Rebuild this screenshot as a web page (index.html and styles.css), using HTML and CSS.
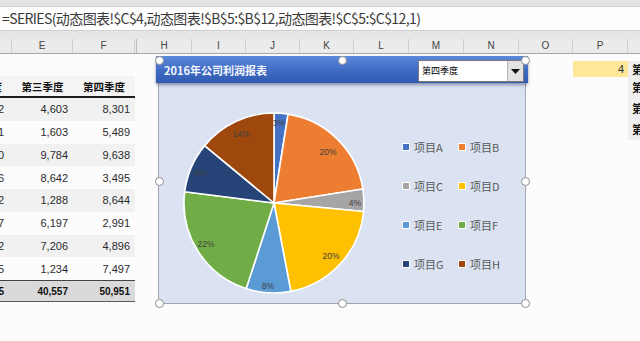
FILE: index.html
```html
<!DOCTYPE html>
<html lang="zh-CN">
<head>
<meta charset="utf-8">
<title>动态图表</title>
<link rel="stylesheet" href="styles.css">
</head>
<body>
<div class="app">
  <div class="topband"></div>
  <div class="formula">=SERIES(动态图表!$C$4,动态图表!$B$5:$B$12,动态图表!$C$5:$C$12,1)</div>
  <div class="band"></div>
  <div class="colhead">
    <div class="ch c12"></div>
    <div class="ch c61">E</div>
    <div class="ch c62">F</div>
    <div class="ch c2"></div>
    <div class="ch c55">H</div>
    <div class="ch c54">I</div>
    <div class="ch c54">J</div>
    <div class="ch c54">K</div>
    <div class="ch c55">L</div>
    <div class="ch c55">M</div>
    <div class="ch c55">N</div>
    <div class="ch c54">O</div>
    <div class="ch c55">P</div>
    <div class="ch cq"></div>
  </div>
  <div class="sheet">
    <div class="data">
      <div class="row head"><span>第二季度</span><span>第三季度</span><span>第四季度</span></div>
      <div class="row odd"><span class="num">3,812</span><span class="num">4,603</span><span class="num">8,301</span></div>
      <div class="row"><span class="num">7,201</span><span class="num">1,603</span><span class="num">5,489</span></div>
      <div class="row odd"><span class="num">2,460</span><span class="num">9,784</span><span class="num">9,638</span></div>
      <div class="row"><span class="num">5,316</span><span class="num">8,642</span><span class="num">3,495</span></div>
      <div class="row odd"><span class="num">6,532</span><span class="num">1,288</span><span class="num">8,644</span></div>
      <div class="row"><span class="num">4,147</span><span class="num">6,197</span><span class="num">2,991</span></div>
      <div class="row odd"><span class="num">8,932</span><span class="num">7,206</span><span class="num">4,896</span></div>
      <div class="row"><span class="num">3,155</span><span class="num">1,234</span><span class="num">7,497</span></div>
      <div class="row total"><span class="num">41,555</span><span class="num">40,557</span><span class="num">50,951</span></div>
    </div>
    <div class="side">
      <div class="srow r1"><span class="pcell">4</span><span class="qcell">第一季度</span></div>
      <div class="srow r2"><span class="pblank"></span><span class="qcell">第二季度</span></div>
      <div class="srow r3"><span class="pblank"></span><span class="qcell">第三季度</span></div>
      <div class="srow r4"><span class="pblank"></span><span class="qcell">第四季度</span></div>
    </div>

    <div class="chart">
      <div class="titlebar">
        <span class="title">2016年公司利润报表</span>
        <div class="dropdown"><span class="ddtext">第四季度</span><span class="ddbtn"><svg width="9" height="5" viewBox="0 0 9 5"><path d="M0 0H9L4.5 5Z" fill="#111"/></svg></span></div>
      </div>
      <div class="plot">
        <svg class="pie" width="184" height="184" viewBox="0 0 184 184">
          <g stroke="#fff" stroke-width="1.6" stroke-linejoin="round">
            <path d="M92 92L92 2A90 90 0 0 1 106.08 3.11Z" fill="#4472c4"/>
            <path d="M92 92L106.08 3.11A90 90 0 0 1 180.89 77.92Z" fill="#ed7d31"/>
            <path d="M92 92L180.89 77.92A90 90 0 0 1 181.6 100.47Z" fill="#a5a5a5"/>
            <path d="M92 92L181.6 100.47A90 90 0 0 1 108.86 180.41Z" fill="#ffc000"/>
            <path d="M92 92L108.86 180.41A90 90 0 0 1 64.19 177.6Z" fill="#5b9bd5"/>
            <path d="M92 92L64.19 177.6A90 90 0 0 1 2.71 80.72Z" fill="#70ad47"/>
            <path d="M92 92L2.71 80.72A90 90 0 0 1 22.65 34.63Z" fill="#264478"/>
            <path d="M92 92L22.65 34.63A90 90 0 0 1 92 2Z" fill="#9e480e"/>
          </g>
          <g class="lbl" text-anchor="middle" dominant-baseline="central">
            <text x="97" y="12">3%</text>
            <text x="146" y="41">20%</text>
            <text x="173" y="92">4%</text>
            <text x="149" y="145">20%</text>
            <text x="86" y="175">8%</text>
            <text x="24" y="133">22%</text>
            <text x="19" y="62">9%</text>
            <text x="59" y="23">14%</text>
          </g>
        </svg>
        <div class="legend">
          <div class="li"><i class="mk a"></i>项目A</div>
          <div class="li"><i class="mk b"></i>项目B</div>
          <div class="li"><i class="mk c"></i>项目C</div>
          <div class="li"><i class="mk d"></i>项目D</div>
          <div class="li"><i class="mk e"></i>项目E</div>
          <div class="li"><i class="mk f"></i>项目F</div>
          <div class="li"><i class="mk g"></i>项目G</div>
          <div class="li"><i class="mk h"></i>项目H</div>
        </div>
      </div>
      <span class="hd h1"></span><span class="hd h2"></span><span class="hd h3"></span>
      <span class="hd h4"></span><span class="hd h5"></span>
      <span class="hd h6"></span><span class="hd h7"></span><span class="hd h8"></span>
    </div>
  </div>
</div>
</body>
</html>
```
FILE: styles.css
```css
* { box-sizing: border-box; margin: 0; padding: 0; }
html, body { width: 640px; height: 341px; overflow: hidden; background: #fcfcfc; }
body { font-family: "Liberation Sans", "Noto Sans CJK SC", sans-serif; color: #222; }
.app { width: 640px; height: 341px; overflow: hidden; display: flex; flex-direction: column; }

.topband { height: 7px; background: #e3e3e3; border-bottom: 1px solid #d2d2d2; }
.formula {
  height: 24px; background: #fdfdfd; border-bottom: 1px solid #cfcfcf;
  font-family: "Noto Sans CJK SC", sans-serif; font-size: 14px; line-height: 22px;
  color: #3a3a3a; padding-left: 2px; white-space: nowrap; letter-spacing: -0.6px;
}
.band { height: 8px; background: #e6e6e6; }
.colhead { height: 15px; display: flex; background: #ebebeb; border-bottom: 1px solid #a6a6a6; }
.ch {
  flex: none; border-right: 1px solid #cfcfcf; font-size: 10px; line-height: 14px;
  text-align: center; color: #444;
}
.c12 { width: 12px; }
.c61 { width: 61px; }
.c62 { width: 62px; }
.c2 { width: 2px; border-right-color: #bdbdbd; }
.c54 { width: 54px; }
.c55 { width: 55px; }
.cq { flex: 1; border-right: none; }

.sheet { flex: 1; position: relative; display: flex; align-items: flex-start; }

.data { margin-left: -50px; margin-top: 22px; width: 185px; flex: none; }
.row { display: grid; grid-template-columns: 62px 61px 62px; height: 22.75px; align-items: center; }
.row.odd { background: #f1f1f1; }
.row span { padding-right: 5px; text-align: right; white-space: nowrap; }
.row span:first-child { padding-right: 8px; }
.num { font-size: 11px; color: #2b2b2b; }
.row.head { height: 22px; background: #f4f4f4; border-bottom: 2px solid #1e1e1e; }
.row.head span {
  text-align: center; padding: 0; font-family: "Noto Sans CJK SC", sans-serif;
  font-weight: 700; font-size: 10.5px; color: #111;
}
.row.total { height: 22px; background: #dadada; border-top: 1.5px solid #444; border-bottom: 1.5px solid #5a5a5a; }
.row.total .num { font-weight: 700; font-size: 10px; color: #111; }

.side { margin-left: auto; margin-top: 7px; width: 67px; flex: none; }
.srow { display: flex; }
.r1 { height: 16px; }
.r2 { height: 20px; }
.r3 { height: 21px; }
.r4 { height: 22px; }
.pcell, .pblank { width: 55px; flex: none; }
.pcell { background: #ffe699; font-size: 11px; text-align: right; padding-right: 4px; line-height: 16px; color: #333; }
.qcell {
  flex: 1; background: #efefef; padding-left: 4px; font-family: "Noto Sans CJK SC", sans-serif;
  font-weight: 700; font-size: 11px; white-space: nowrap; overflow: hidden;
  display: flex; align-items: center; color: #111;
}

.chart {
  position: absolute; left: 158px; top: 5px; width: 368px; height: 245px;
  background: #dbe3f3; border: 1px solid #a0a4ac;
}
.titlebar {
  position: absolute; left: -3px; top: -4px; width: 372px; height: 27px;
  background: linear-gradient(#5c89da, #3e6ac2 55%, #2f5bb3);
  box-shadow: 0 2px 3px rgba(40, 50, 80, 0.45);
  display: flex; align-items: center; padding-left: 8px;
}
.title { font-family: "Noto Sans CJK SC", sans-serif; font-weight: 700; font-size: 11px; color: #f4f7fd; }
.dropdown {
  margin-left: auto; margin-right: 4px; margin-top: 3px; width: 106px; height: 22px; background: #fff;
  border: 1px solid #7b7b7b; display: flex; align-items: stretch;
}
.ddtext { flex: 1; font-family: "Noto Sans CJK SC", sans-serif; font-size: 9px; line-height: 20px; padding-left: 3px; color: #000; }
.ddbtn { width: 16px; background: #e3e3e3; border-left: 1px solid #b5b5b5; display: flex; align-items: center; justify-content: center; }

.plot { display: flex; align-items: flex-start; padding: 51px 0 0 23px; }
.pie { flex: none; display: block; }
.lbl text { font-family: "Liberation Sans", sans-serif; font-size: 8.5px; fill: #404040; }
.legend {
  margin-left: 36px; margin-top: 29px; display: grid; grid-template-columns: 56px 56px;
  grid-auto-rows: 14px; row-gap: 25px;
}
.li {
  display: flex; align-items: center; font-family: "Noto Sans CJK SC", sans-serif;
  font-size: 11px; color: #595959; white-space: nowrap;
}
.mk { width: 8px; height: 8px; border: 1px solid #fff; margin-right: 4px; flex: none; }
.mk.a { background: #4472c4; }
.mk.b { background: #ed7d31; }
.mk.c { background: #a5a5a5; }
.mk.d { background: #ffc000; }
.mk.e { background: #5b9bd5; }
.mk.f { background: #70ad47; }
.mk.g { background: #264478; }
.mk.h { background: #9e480e; }

.hd {
  position: absolute; width: 9px; height: 9px; border-radius: 50%;
  background: #fff; border: 1.5px solid #8e8e8e; margin: -4.5px 0 0 -4.5px;
}
.h1 { left: 0; top: 0; }
.h2 { left: 50%; top: 0; }
.h3 { left: 100%; top: 0; }
.h4 { left: 0; top: 50%; }
.h5 { left: 100%; top: 50%; }
.h6 { left: 0; top: 100%; }
.h7 { left: 50%; top: 100%; }
.h8 { left: 100%; top: 100%; }
```
